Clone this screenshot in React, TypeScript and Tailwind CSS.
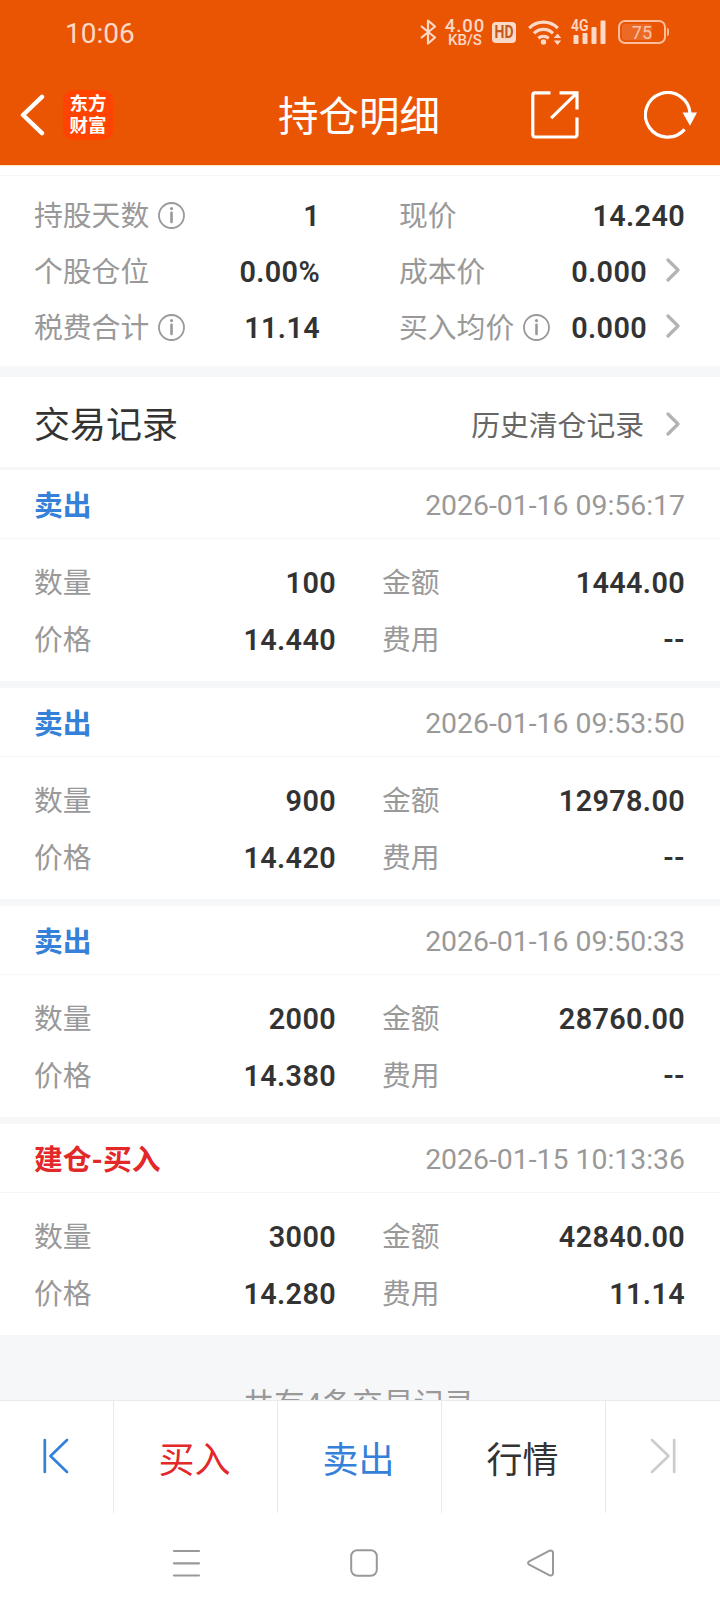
import React from 'react';

type Trade = {
  type: string;
  side: 'buy' | 'sell';
  time: string;
  quantity: string;
  amount: string;
  price: string;
  fee: string;
};

const trades: Trade[] = [
  { type: '卖出', side: 'sell', time: '2026-01-16 09:56:17', quantity: '100', amount: '1444.00', price: '14.440', fee: '--' },
  { type: '卖出', side: 'sell', time: '2026-01-16 09:53:50', quantity: '900', amount: '12978.00', price: '14.420', fee: '--' },
  { type: '卖出', side: 'sell', time: '2026-01-16 09:50:33', quantity: '2000', amount: '28760.00', price: '14.380', fee: '--' },
  { type: '建仓-买入', side: 'buy', time: '2026-01-15 10:13:36', quantity: '3000', amount: '42840.00', price: '14.280', fee: '11.14' },
];

const InfoIcon = () => (
  <svg width="27" height="27" viewBox="0 0 27 27" fill="none" stroke="#999" className="ml-[9px] -mt-px shrink-0">
    <circle cx="13.5" cy="13.5" r="12.5" strokeWidth="1.8" />
    <circle cx="13.5" cy="6.6" r="1.6" fill="#999" stroke="none" />
    <path d="M13.5 10.8V20" strokeWidth="2.6" strokeLinecap="round" />
  </svg>
);

const Chevron = () => (
  <svg width="14" height="24" viewBox="0 0 14 24" fill="none" stroke="#b3b3b3" strokeWidth="3.2" strokeLinecap="round" strokeLinejoin="round" className="ml-[19px] mr-[5px] -mt-[4px] shrink-0">
    <path d="M2 2L12 12L2 22" />
  </svg>
);

const StatusBar = () => (
  <div className="flex h-16 items-center justify-between pl-[65px] pr-[51px] text-[#fcd9c6]">
    <span className="mt-1 text-[28px] leading-8">10:06</span>
    <div className="flex items-center">
      <svg width="17" height="26" viewBox="0 0 17 26" fill="none" stroke="currentColor" strokeWidth="2.2" strokeLinejoin="round">
        <path d="M1 7L15 18.5L8 24.5V1.5L15 7.5L1 19" />
      </svg>
      <div className="ml-2 flex w-10 flex-col items-center pt-0.5 font-medium">
        <span className="text-[18.5px] leading-[14px] tracking-[1px]">4.00</span>
        <span className="text-[15px] leading-[15px]">KB/S</span>
      </div>
      <div className="ml-[7px] flex h-[21px] w-6 items-center justify-center rounded bg-[#fcd9c6] text-[#c2591f]">
        <span className="scale-y-125 text-[14px] font-bold leading-none">HD</span>
      </div>
      <svg width="34" height="27" viewBox="0 0 34 27" fill="none" stroke="currentColor" strokeWidth="3.2" className="ml-3">
        <path d="M1.2 9.2A20 20 0 0 1 29.8 9.2M6 14.3A13.5 13.5 0 0 1 25 14.3M10.3 19.2A8 8 0 0 1 20.7 19.2" />
        <circle cx="15.5" cy="23" r="2.7" fill="currentColor" stroke="none" />
        <path d="M29.5 14.5L33.2 19H25.8ZM29.5 26L33.2 21.5H25.8Z" fill="currentColor" stroke="none" />
      </svg>
      <svg width="36" height="26" viewBox="0 0 36 26" fill="currentColor" className="ml-[9px] overflow-visible">
        <text x="0" y="12" fontSize="16" fontWeight="600" textLength="17.5" lengthAdjust="spacingAndGlyphs">4G</text>
        <rect x="2.5" y="16" width="5" height="9" rx="1" />
        <rect x="11.5" y="14" width="5" height="11" rx="1" />
        <rect x="20.5" y="8" width="5" height="17" rx="1" />
        <rect x="29.5" y="1.5" width="5" height="23.5" rx="1" />
      </svg>
      <div className="ml-[11px] flex h-6 w-12 rounded-[7px] border-2 border-[#f9bd9c] p-[2px]">
        <div className="flex w-[30px] items-center justify-end rounded-[3px] bg-[#ec6a25]">
          <span className="pt-0.5 text-[18px] font-normal leading-none text-[#f9c5a8]">75</span>
        </div>
      </div>
      <div className="ml-px h-2 w-[2px] rounded-r bg-[#f9bd9c]" />
    </div>
  </div>
);

const Header = () => (
  <header className="h-[165px] bg-[#ea5504] text-white">
    <StatusBar />
    <div className="flex h-[101px] items-center pl-5 pr-[22px]">
      <svg width="26" height="42" viewBox="0 0 26 42" fill="none" stroke="currentColor" strokeWidth="4.4" strokeLinecap="round" strokeLinejoin="round">
        <path d="M22 2.8L3 21L22 39.2" />
      </svg>
      <div className="ml-[17px] flex h-[50px] w-[50px] flex-col items-center justify-center rounded-[10px] bg-[#ff4400] text-[18.5px] font-bold leading-[22px]">
        <span>东方</span>
        <span>财富</span>
      </div>
      <h1 className="ml-[165px] w-[162px] whitespace-nowrap pt-1 text-[40.5px] font-normal leading-[50px]">持仓明细</h1>
      <svg width="48" height="48" viewBox="0 0 48 48" fill="none" stroke="currentColor" strokeWidth="3.2" className="ml-[91px]">
        <path d="M19.5 1.9H4A2.3 2.3 0 0 0 1.8 4.2V43.8A2.3 2.3 0 0 0 4 46H43.8A2.3 2.3 0 0 0 46 43.8V26.5" />
        <path d="M28.5 1.9H46V18.5M46 1.9L20.2 27.2" />
      </svg>
      <svg width="54" height="48" viewBox="0 0 54 48" fill="none" stroke="currentColor" strokeWidth="3.2" className="ml-[65px]">
        <path d="M46 22.5A22.3 22.3 0 1 0 40.6 38.4" />
        <path d="M38.5 21.5H53L46 34.8Z" fill="currentColor" stroke="none" />
      </svg>
    </div>
  </header>
);

const value = 'ml-auto text-[28.8px] font-semibold tracking-[0.35px] text-[#333]';

type SummaryItemProps = { label: string; text: string; info?: boolean; link?: boolean };

const SummaryItem = ({ label, text, info, link }: SummaryItemProps) => (
  <div className="flex h-14 items-center">
    <span className="text-[28.8px] text-[#999]">{label}</span>
    {info && <InfoIcon />}
    <span className={value}>{text}</span>
    {link && <Chevron />}
  </div>
);

const Summary = () => (
  <section className="border-t border-[#fde6c8] bg-white">
    <div className="mt-[9px] grid h-[191px] grid-cols-[286px_286px] content-start gap-x-[79px] border-t border-[#f7f7f7] pl-[34px] pt-3">
      <SummaryItem label="持股天数" text="1" info />
      <SummaryItem label="现价" text="14.240" />
      <SummaryItem label="个股仓位" text="0.00%" />
      <SummaryItem label="成本价" text="0.000" link />
      <SummaryItem label="税费合计" text="11.14" info />
      <SummaryItem label="买入均价" text="0.000" info link />
    </div>
  </section>
);

const Field = ({ label, text }: { label: string; text: string }) => (
  <div className="flex h-[57px] items-center">
    <span className="text-[28.8px] text-[#999]">{label}</span>
    <span className={value}>{text}</span>
  </div>
);

const TradeCard = ({ trade }: { trade: Trade }) => (
  <article className="h-[211px] shrink-0 bg-white">
    <div className="flex h-[69px] items-center justify-between border-b border-[#f5f6f7] pl-[34px] pr-[35px] pt-1">
      <span className={`text-[28.8px] font-bold ${trade.side === 'sell' ? 'text-[#3580d9]' : 'text-[#e22828]'}`}>{trade.type}</span>
      <span className="text-[28.4px] text-[#999]">{trade.time}</span>
    </div>
    <div className="grid grid-cols-[302px_303px] gap-x-[46px] pl-[34px] pt-4">
      <Field label="数量" text={trade.quantity} />
      <Field label="金额" text={trade.amount} />
      <Field label="价格" text={trade.price} />
      <Field label="费用" text={trade.fee} />
    </div>
  </article>
);

const BottomBar = () => (
  <div className="grid h-[113px] shrink-0 grid-cols-[114px_164px_164px_164px_1fr] divide-x divide-[#e9eaec] border-t border-[#e9eaec] bg-white text-[36px]">
    <button className="flex items-center justify-center pb-[3px] pr-0.5 text-[#3580d9]">
      <svg width="26" height="36" viewBox="0 0 26 36" fill="none" stroke="currentColor" strokeWidth="2.7" strokeLinecap="round" strokeLinejoin="round">
        <path d="M1.8 2V34M24 2L7.5 18L24 34" />
      </svg>
    </button>
    <button className="pr-0.5 pt-[7px] text-[#e22828]">买入</button>
    <button className="pr-0.5 pt-[7px] text-[#3580d9]">卖出</button>
    <button className="pr-0.5 pt-[7px] text-[#333]">行情</button>
    <button className="flex items-center justify-center pb-[3px] text-[#ccc]">
      <svg width="26" height="36" viewBox="0 0 26 36" fill="none" stroke="currentColor" strokeWidth="2.7" strokeLinecap="round" strokeLinejoin="round">
        <path d="M24.2 2V34M2 2L18.5 18L2 34" />
      </svg>
    </button>
  </div>
);

const SystemNav = () => (
  <nav className="flex h-[99px] shrink-0 items-center bg-white pl-[172px] text-[#999]">
    <svg width="29" height="28" viewBox="0 0 29 28" stroke="currentColor" strokeWidth="2.2" strokeLinecap="round">
      <path d="M2 2H27M2 14.3H27M2 26.5H27" />
    </svg>
    <svg width="28" height="28" viewBox="0 0 28 28" fill="none" stroke="currentColor" strokeWidth="2" className="ml-[149px]">
      <rect x="1.2" y="1.2" width="25.6" height="25.6" rx="6" />
    </svg>
    <svg width="28" height="28" viewBox="0 0 28 28" fill="none" stroke="currentColor" strokeWidth="2" strokeLinejoin="round" className="ml-[149px]">
      <path d="M2.2 12.4L22.6 1.7Q25.8 .8 26 3.8V24.2Q25.8 27.2 22.6 26.3L2.2 15.6Q-.2 14 2.2 12.4Z" />
    </svg>
  </nav>
);

const App = () => {
  return (
    <div lang="zh-CN" className="flex h-[1612px] w-[720px] flex-col overflow-hidden bg-[#f6f7f9] font-[Roboto,'Noto_Sans_CJK_SC',sans-serif] leading-none">
      <Header />
      <Summary />
      <div className="mt-[11px] flex h-[90px] shrink-0 items-center justify-between bg-white pl-[34px] pr-[35px] pt-[7px]">
        <h2 className="text-[36px] font-normal text-[#333]">交易记录</h2>
        <div className="flex items-center pt-0.5">
          <span className="pr-[3px] text-[28.8px] text-[#666]">历史清仓记录</span>
          <Chevron />
        </div>
      </div>
      <main className="mt-[3px] flex h-[930px] shrink-0 flex-col gap-[7px] overflow-hidden">
        {trades.map((trade) => (
          <TradeCard key={trade.time} trade={trade} />
        ))}
        <p className="mt-[45px] shrink-0 pr-0.5 text-center text-[30.6px] leading-[36px] text-[#999]">共有{trades.length}条交易记录</p>
      </main>
      <BottomBar />
      <SystemNav />
    </div>
  );
};

export default App;
